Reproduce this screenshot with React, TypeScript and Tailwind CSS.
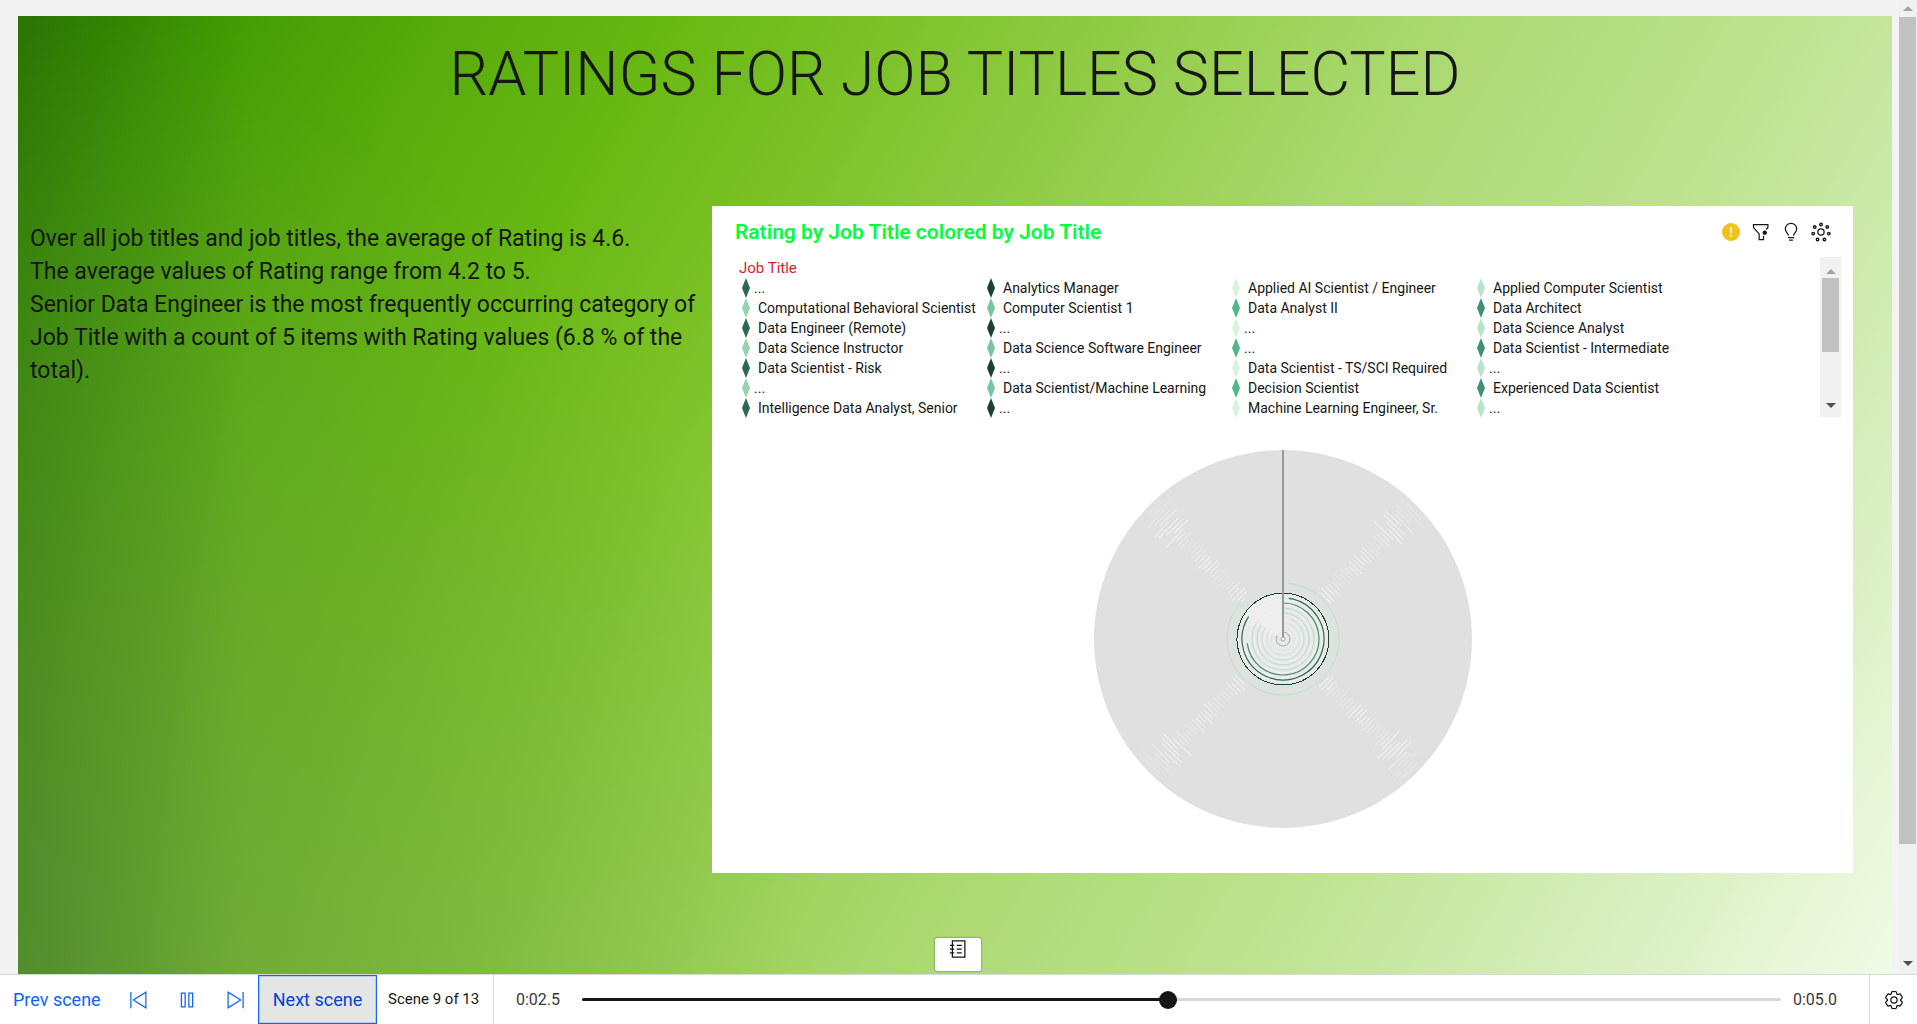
import { useState } from "react";
import type { ReactNode } from "react";

const tone = {
  a: ["#2d6a4f", "#95d5b2"],
  b: ["#1b4332", "#74c69d"],
  c: ["#d8f3dc", "#52b788"],
  d: ["#b7e4c7", "#40916c"],
};

const columns: { fills: string[]; items: string[] }[] = [
  {
    fills: tone.a,
    items: ["...", "Computational Behavioral Scientist", "Data Engineer (Remote)", "Data Science Instructor", "Data Scientist - Risk", "...", "Intelligence Data Analyst, Senior"],
  },
  {
    fills: tone.b,
    items: ["Analytics Manager", "Computer Scientist 1", "...", "Data Science Software Engineer", "...", "Data Scientist/Machine Learning", "..."],
  },
  {
    fills: tone.c,
    items: ["Applied AI Scientist / Engineer", "Data Analyst II", "...", "...", "Data Scientist - TS/SCI Required", "Decision Scientist", "Machine Learning Engineer, Sr."],
  },
  {
    fills: tone.d,
    items: ["Applied Computer Scientist", "Data Architect", "Data Science Analyst", "Data Scientist - Intermediate", "...", "Experienced Data Scientist", "..."],
  },
];

function Icon({ size = "size-5", children }: { size?: string; children: ReactNode }) {
  return (
    <svg viewBox="0 0 32 32" className={size} fill="none" stroke="currentColor" strokeWidth="2" aria-hidden="true">
      {children}
    </svg>
  );
}

const FilterIcon = () => (
  <Icon>
    <path d="M20 22v6h-7v-9L4 9V4h23v5l-3 3" />
    <circle cx="22" cy="17" r="3.5" fill="currentColor" stroke="none" />
  </Icon>
);

const BulbIcon = () => (
  <Icon>
    <path d="M11 25h10M13 29h6" />
    <path d="M12 22c0-4-5-5-5-11a9 9 0 0 1 18 0C25 17 20 18 20 22" />
  </Icon>
);

const ClusterIcon = () => (
  <Icon>
    <circle cx="16" cy="16" r="5" />
    {[[16, 4], [26, 8], [28.5, 18.5], [21.5, 28], [10.5, 28], [3.5, 18.5], [6, 8]].map(([x, y]) => (
      <circle key={`${x}-${y}`} cx={x} cy={y} r="2" strokeWidth="2.2" />
    ))}
  </Icon>
);

const GearIcon = () => (
  <Icon>
    <circle cx="16" cy="16" r="5" />
    <path d="M26.5 16.76v-1.52l2-1.7a2 2 0 0 0 .4-2.54L26.6 7.4a2 2 0 0 0-2.3-.9l-2.5.9-1.3-.8-.5-2.6a2 2 0 0 0-2-1.6h-4a2 2 0 0 0-2 1.6l-.5 2.6-1.3.8-2.5-.9a2 2 0 0 0-2.3.9L3.1 11a2 2 0 0 0 .4 2.54l2 1.7v1.52l-2 1.7a2 2 0 0 0-.4 2.54l2.3 3.6a2 2 0 0 0 2.3.9l2.5-.9 1.3.8.5 2.6a2 2 0 0 0 2 1.6h4a2 2 0 0 0 2-1.6l.5-2.6 1.3-.8 2.5.9a2 2 0 0 0 2.3-.9l2.3-3.6a2 2 0 0 0-.4-2.54Z" />
  </Icon>
);

const NotebookIcon = () => (
  <Icon>
    <path d="M7 3h20v26H7zM14 10h8M14 16h8M14 22h8M3 10h7M3 16h7M3 22h7" />
  </Icon>
);

function point(r: number, deg: number) {
  const t = ((deg - 90) * Math.PI) / 180;
  return `${(r * Math.cos(t)).toFixed(2)} ${(r * Math.sin(t)).toFixed(2)}`;
}

function arc(r: number, from: number, to: number) {
  return `M${point(r, from)}A${r} ${r} 0 ${to - from > 180 ? 1 : 0} 1 ${point(r, to)}`;
}

const arcs: [number, number, number, string, number][] = [
  [56, 6, 312, "#b7e4c7", 1],
  [51, 6, 330, "#c9f0d2", 1],
  [46, 0, 359.9, "#1b4332", 1],
  [41, 8, 303, "#2d6a4f", 1.2],
  [36, 0, 263, "#40916c", 1.2],
  [31, 0, 300, "#b5dccb", 1],
  [26, 0, 302, "#b5dccb", 1],
  [21, 20, 302, "#c0dfd2", 1],
  [16, 20, 310, "#d3e7df", 1],
  [12, 60, 300, "#dcebe5", 1],
];

function gleams() {
  const out: { d: string; o: number }[] = [];
  for (const diagonal of [45, 135, 225, 315]) {
    for (let i = 0; i < 34; i++) {
      const r = 56 + i * 3.85;
      const outer = r > 148;
      const half = (outer ? 10 : 5) + ((i * 7) % 5);
      const shift = (((i * 5) % 7) - 3) * (outer ? 2.5 : 0.6);
      const a = diagonal + (shift / r) * 57;
      const spread = (half / r) * 57;
      const wave = 0.5 + 0.5 * Math.cos((r - 108) / 7.5);
      out.push({ d: `M${point(r, a - spread)}L${point(r, a + spread)}`, o: 0.3 + 0.6 * wave });
    }
  }
  return out;
}

function SpiralChart() {
  return (
    <svg viewBox="-190 -190 380 380" className="mx-auto w-[380px] max-w-full" role="img" aria-label="Rating by Job Title">
      <circle r="189" fill="#e0e0e0" />
      {gleams().map((g) => (
        <path key={g.d} d={g.d} fill="none" stroke="#fff" strokeWidth="0.9" opacity={g.o} />
      ))}
      <circle r="46" fill="#e8e8e8" />
      <path d="M0 0V-46A46 46 0 0 0 -42 -18Z" fill="#ededed" />
      {[8, 14, 19, 24, 29, 34, 39, 43].map((r) => (
        <circle key={r} r={r} fill="none" stroke="#f0f0f0" strokeWidth="1" />
      ))}
      {arcs.map(([r, from, to, color, w]) => (
        <path
          key={r}
          d={arc(r, from, to)}
          fill="none"
          stroke={color}
          strokeWidth={w}
          shapeRendering={r === 46 ? "crispEdges" : "auto"}
        />
      ))}
      <path d={arc(7, 0, 300)} fill="none" stroke="#9aa8a3" strokeWidth="1" />
      <circle r="2" fill="#f4f4f4" stroke="#9aa8a3" strokeWidth="1" />
      <path d="M0 -189V-2" stroke="#939b98" strokeWidth="2" />
    </svg>
  );
}

function Arrow({ down = false, color }: { down?: boolean; color: string }) {
  return (
    <svg viewBox="0 0 10 5" className="h-[5px] w-[10px]" fill={color} aria-hidden="true">
      <path d={down ? "M0 0h10L5 5z" : "M0 5h10L5 0z"} />
    </svg>
  );
}

function Legend() {
  return (
    <div className="flex h-40">
      <div className="min-w-0 flex-1 pl-[19px] pt-px text-sm leading-5 text-[#161616]">
        <h3 className="text-[15px] leading-5 text-[#da1e28]">Job Title</h3>
        <div className="grid grid-cols-[repeat(4,245px)]">
          {columns.map((column, c) => (
            <ul key={c}>
              {column.items.map((item, i) => (
                <li key={i} className="flex h-5 items-center whitespace-nowrap pl-[3px]">
                  <svg viewBox="0 0 8 20" className="h-5 w-2" fill={column.fills[i % 2]} aria-hidden="true">
                    <path d="M4 0 8 10 4 20 0 10z" />
                  </svg>
                  <span className={item === "..." ? "pl-1" : "pl-2"}>{item}</span>
                </li>
              ))}
            </ul>
          ))}
        </div>
      </div>
      <div className="flex w-[21px] flex-col items-center bg-[#f1f1f1] pb-[9px] pt-3">
        <Arrow color="#a3a3a3" />
        <div className="mt-1 h-[74px] w-[17px] bg-[#c1c1c1]" />
        <div className="mt-auto">
          <Arrow down color="#505050" />
        </div>
      </div>
    </div>
  );
}

export default function App() {
  const [time, setTime] = useState(489);
  return (
    <div className="flex h-screen flex-col overflow-hidden bg-[#f3f3f3] font-[Roboto,sans-serif] text-[#161616]">
      <div className="flex min-h-0 flex-1">
        <main className="relative ml-[18px] mr-1.5 mt-4 min-w-0 flex-1 bg-[linear-gradient(90deg,rgba(30,90,10,0.3),transparent_12%),radial-gradient(ellipse_42%_100%_at_0%_100%,rgba(110,155,80,0.7),transparent),linear-gradient(120deg,#2f7f00_0%,#429a04_8%,#56aa0a_17%,#68b812_27%,#7cc228_36%,#93cd4a_47%,#a9d86e_58%,#bfe392_74%,#d8efc0_88%,#f0fbe6_100%)]">
          <h1 className="pt-5 text-center text-[61px] font-light leading-[76px]">RATINGS FOR JOB TITLES SELECTED</h1>
          <div className="mt-[94px] grid grid-cols-[694px_1fr] pr-[39px]">
            <div className="px-3 pt-4 text-[23px] leading-[33px]">
              <p>Over all job titles and job titles, the average of Rating is 4.6.</p>
              <p>The average values of Rating range from 4.2 to 5.</p>
              <p>Senior Data Engineer is the most frequently occurring category of Job Title with a count of 5 items with Rating values (6.8 % of the total).</p>
            </div>
            <section className="h-[667px] bg-white pl-2 pr-3">
              <header className="flex h-[51px] items-center justify-between pl-[15px] pr-2.5">
                <h2 className="text-[21px] font-semibold leading-6 text-[#00ff3c]">Rating by Job Title colored by Job Title</h2>
                <div className="flex items-center gap-2.5">
                  <button aria-label="Warning" className="flex size-5 items-center justify-center">
                    <svg viewBox="0 0 18 18" className="size-[18px]" aria-hidden="true">
                      <circle cx="9" cy="9" r="9" fill="#f1c21b" />
                      <path d="M9 4v6.500M9 12v2" stroke="#fff" strokeWidth="1.500" />
                    </svg>
                  </button>
                  <button aria-label="Filter"><FilterIcon /></button>
                  <button aria-label="Insights"><BulbIcon /></button>
                  <button aria-label="Related visualizations"><ClusterIcon /></button>
                </div>
              </header>
              <Legend />
              <div className="pl-1 pt-8">
                <SpiralChart />
              </div>
            </section>
          </div>
          <button aria-label="Open timeline notes" className="absolute bottom-[3px] left-1/2 ml-[3px] flex h-[33px] w-[46px] -translate-x-1/2 items-start justify-center rounded-xs bg-white pt-px shadow-[0_0_2px_rgba(0,0,0,0.6)]">
            <NotebookIcon />
          </button>
        </main>
        <div className="flex w-[19px] flex-col items-center bg-[#f1f1f1] pb-2 pt-1.5">
          <Arrow color="#a3a3a3" />
          <div className="mt-1.5 h-[827px] w-[17px] bg-[#c1c1c1]" />
          <div className="mt-auto">
            <Arrow down color="#505050" />
          </div>
        </div>
      </div>
      <footer className="flex h-[50px] items-stretch border-t border-[#d8d8d8] bg-white text-[15px]">
        <button className="w-[115px] pl-[13px] text-left text-lg text-[#0f62fe]">Prev scene</button>
        <button aria-label="Previous" className="flex w-12 items-center justify-center text-[#0f62fe]">
          <Icon>
            <path d="M27 3.500v25L7 16zM3 3v26" />
          </Icon>
        </button>
        <button aria-label="Pause" className="flex w-12 items-center justify-center text-[#0f62fe]">
          <Icon>
            <path d="M7 5h6v22H7zM19 5h6v22h-6z" />
          </Icon>
        </button>
        <button aria-label="Next" className="flex w-[47px] items-center justify-center text-[#0f62fe]">
          <Icon>
            <path d="M5 3.500v25L25 16zM29 3v26" />
          </Icon>
        </button>
        <button className="w-[119px] border border-[#0f62fe] bg-[#e5e5e5] text-lg text-[#0043ce] shadow-[inset_0_0_0_1px_#b8ccf0]">Next scene</button>
        <div className="flex w-[117px] items-center border-r border-[#d8d8d8] pl-[11px]">Scene 9 of 13</div>
        <div className="flex min-w-0 flex-1 items-center border-r border-[#d8d8d8] pl-[22px] pr-8 text-base text-[#393939]">
          <label htmlFor="time" className="w-[66px]">0:02.5</label>
          <input
            id="time"
            type="range"
            min="0"
            max="1000"
            value={time}
            onChange={(e) => setTime(Number(e.target.value))}
            style={{ backgroundImage: `linear-gradient(to right, #161616 ${time / 10}%, #d8d8d8 ${time / 10}%)` }}
            className="h-[3px] min-w-0 flex-1 appearance-none rounded-full [&::-webkit-slider-thumb]:size-[18px] [&::-webkit-slider-thumb]:appearance-none [&::-webkit-slider-thumb]:rounded-full [&::-webkit-slider-thumb]:bg-[#161616]"
          />
          <span className="pl-3">0:05.0</span>
        </div>
        <button aria-label="Settings" className="flex w-[47px] items-center justify-center">
          <GearIcon />
        </button>
      </footer>
    </div>
  );
}
